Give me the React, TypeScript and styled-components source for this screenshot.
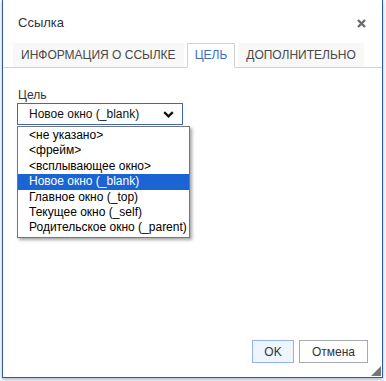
import React from 'react';
import styled, { createGlobalStyle } from 'styled-components';

const GlobalStyle = createGlobalStyle`
  html, body {
    margin: 0;
    padding: 0;
    background: #fff;
    overflow: hidden;
  }
  body {
    font-family: 'Liberation Sans', Arial, sans-serif;
  }
`;

const Page = styled.div`
  width: 386px;
  height: 381px;
  overflow: hidden;
  background: #fff;
`;

const Dialog = styled.div`
  position: relative;
  box-sizing: border-box;
  margin: -1px 0 0 2px;
  width: 381px;
  height: 379px;
  border: 1px solid #2d5aa6;
  background: #fff;
  display: flex;
  flex-direction: column;
  box-shadow: 0 2px 4px rgba(70, 100, 150, 0.45);
`;

const Header = styled.div`
  height: 43px;
  display: flex;
  align-items: center;
  justify-content: space-between;
  padding: 0 16px 0 15px;
  box-sizing: border-box;
`;

const Title = styled.div`
  font-size: 13px;
  color: #333;
  margin-top: 1px;
`;

const Close = styled.svg`
  width: 9px;
  height: 9px;
  margin-top: 3px;
`;

const TabBar = styled.div`
  display: flex;
  align-items: flex-end;
  gap: 3px;
  height: 24px;
  padding-left: 10px;
  border-bottom: 1px solid #d1d1d1;
`;

const Tab = styled.div<{ $active?: boolean }>`
  box-sizing: border-box;
  height: ${(p) => (p.$active ? '25px' : '24px')};
  margin-bottom: ${(p) => (p.$active ? '-1px' : '0')};
  padding: 0 ${(p) => (p.$active ? '7px' : '8px')} 1px;
  display: flex;
  align-items: center;
  font-size: 12px;
  text-transform: uppercase;
  color: ${(p) => (p.$active ? '#3c6db5' : '#484848')};
  background: ${(p) => (p.$active ? '#fff' : '#f8f8f8')};
  border: ${(p) => (p.$active ? '1px solid #d1d1d1' : 'none')};
  border-bottom: ${(p) => (p.$active ? '1px solid #fff' : 'none')};
`;

const Body = styled.div`
  position: relative;
  flex: 1;
  padding: 20px 0 0 14px;
`;

const Label = styled.div`
  font-size: 12px;
  color: #333;
  line-height: 15px;
  margin-left: 1px;
`;

const Select = styled.div`
  box-sizing: border-box;
  width: 166px;
  height: 22px;
  border: 1px solid #3d69b5;
  display: flex;
  align-items: center;
  justify-content: space-between;
  padding: 0 8px 0 11px;
  font-size: 12px;
  color: #111;
`;

const Chevron = styled.svg`
  width: 11px;
  height: 7px;
`;

const List = styled.div`
  position: absolute;
  left: 14px;
  top: 58px;
  box-sizing: border-box;
  width: 173px;
  border: 1px solid #767676;
  background: #fff;
  padding: 1px 0;
  box-shadow: 2px 2px 3px rgba(0, 0, 0, 0.35);
`;

const Option = styled.div<{ $selected?: boolean }>`
  height: 15.4px;
  line-height: 15.4px;
  padding-left: 11px;
  font-size: 12px;
  white-space: nowrap;
  color: ${(p) => (p.$selected ? '#fff' : '#000')};
  background: ${(p) => (p.$selected ? '#1a65d3' : 'transparent')};
`;

const Footer = styled.div`
  display: flex;
  justify-content: flex-end;
  gap: 5px;
  padding: 0 14px 14px 0;
`;

const Button = styled.div<{ $primary?: boolean }>`
  box-sizing: border-box;
  height: 23px;
  width: ${(p) => (p.$primary ? '42px' : '69px')};
  display: flex;
  align-items: center;
  justify-content: center;
  font-size: 12px;
  color: #333;
  background: ${(p) => (p.$primary ? '#eef5ff' : '#fff')};
  border: 1px solid ${(p) => (p.$primary ? '#8fb4ee' : '#a9a9a9')};
`;

const Grip = styled.svg`
  position: absolute;
  right: 1px;
  bottom: 1px;
  width: 10px;
  height: 10px;
`;

const options = [
  '<не указано>',
  '<фрейм>',
  '<всплывающее окно>',
  'Новое окно (_blank)',
  'Главное окно (_top)',
  'Текущее окно (_self)',
  'Родительское окно (_parent)',
];

export default function App() {
  return (
    <Page>
      <GlobalStyle />
      <Dialog>
        <Header>
          <Title>Ссылка</Title>
          <Close viewBox="0 0 9 9">
            <path d="M1 1L8 8M8 1L1 8" stroke="#6b6b6b" strokeWidth="2.4" />
          </Close>
        </Header>
        <TabBar>
          <Tab>Информация о ссылке</Tab>
          <Tab $active>Цель</Tab>
          <Tab>Дополнительно</Tab>
        </TabBar>
        <Body>
          <Label>Цель</Label>
          <Select>
            <span>Новое окно (_blank)</span>
            <Chevron viewBox="0 0 11 7">
              <path d="M1.2 1.2L5.5 5.3L9.8 1.2" stroke="#111" strokeWidth="2.3" fill="none" />
            </Chevron>
          </Select>
          <List>
            {options.map((o, i) => (
              <Option key={o} $selected={i === 3}>
                {o}
              </Option>
            ))}
          </List>
        </Body>
        <Footer>
          <Button $primary>OK</Button>
          <Button>Отмена</Button>
        </Footer>
        <Grip viewBox="0 0 10 10">
          <path d="M10 0L10 10L0 10Z" fill="#777" />
        </Grip>
      </Dialog>
    </Page>
  );
}
